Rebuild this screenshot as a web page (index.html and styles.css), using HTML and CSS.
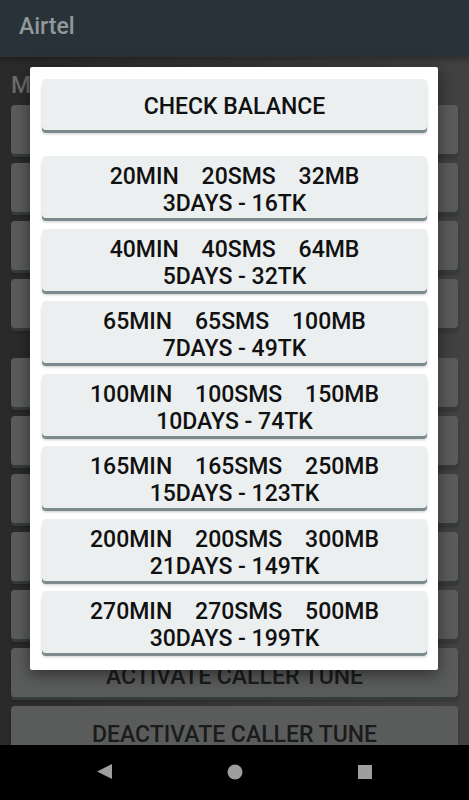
FILE: index.html
```html
<!DOCTYPE html>
<html lang="en">
<head>
  <meta charset="UTF-8" />
  <title>Airtel</title>
  <link rel="stylesheet" href="styles.css">
</head>
<body>
  <div class="appbar">Airtel</div>

  <div class="content">
    <div class="section-title">MY AIRTEL</div>
    <div class="group">
      <div class="btn">INTERNET PACKAGE</div>
      <div class="btn">MINUTE PACKAGE</div>
      <div class="btn">SMS PACKAGE</div>
      <div class="btn">BUNDLE PACKAGE</div>
    </div>
    <div class="group second">
      <div class="btn">CHECK BALANCE</div>
      <div class="btn">CHECK INTERNET</div>
      <div class="btn">CHECK MINUTE</div>
      <div class="btn">CHECK SMS</div>
      <div class="btn">EMERGENCY BALANCE</div>
      <div class="btn">ACTIVATE CALLER TUNE</div>
      <div class="btn">DEACTIVATE CALLER TUNE</div>
    </div>
  </div>

  <div class="navbar">
    <div class="nav-item">
      <svg width="16" height="16" viewBox="0 0 16 16"><polygon points="15,0 15,15 0,7.5" fill="#9e9e9e"/></svg>
    </div>
    <div class="nav-item">
      <svg width="16" height="16" viewBox="0 0 16 16"><circle cx="8" cy="8" r="7.5" fill="#9e9e9e"/></svg>
    </div>
    <div class="nav-item">
      <svg width="16" height="16" viewBox="0 0 16 16"><rect x="1" y="1" width="14" height="14" fill="#9e9e9e"/></svg>
    </div>
  </div>

  <!-- bundle dialog -->
  <div class="dialog">
    <div class="dbtn check">CHECK BALANCE</div>
    <div class="packs">
      <div class="dbtn pack">20MIN    20SMS    32MB
3DAYS - 16TK</div>
      <div class="dbtn pack">40MIN    40SMS    64MB
5DAYS - 32TK</div>
      <div class="dbtn pack">65MIN    65SMS    100MB
7DAYS - 49TK</div>
      <div class="dbtn pack">100MIN    100SMS    150MB
10DAYS - 74TK</div>
      <div class="dbtn pack">165MIN    165SMS    250MB
15DAYS - 123TK</div>
      <div class="dbtn pack">200MIN    200SMS    300MB
21DAYS - 149TK</div>
      <div class="dbtn pack">270MIN    270SMS    500MB
30DAYS - 199TK</div>
    </div>
  </div>
</body>
</html>
```

FILE: styles.css
```css
body {
  margin: 0;
  width: 469px;
  height: 800px;
  overflow: hidden;
  display: flex;
  flex-direction: column;
  font-family: Roboto, 'Noto Sans', sans-serif;
  font-size: 23px;
  background: linear-gradient(to right, #2a2a2a, #424242);
}
.appbar {
  height: 44px;
  padding: 13px 0 0 19px;
  background: #283238;
  color: #93989b;
  font-weight: 500;
  box-shadow: 0 2px 6px rgba(0,0,0,0.35);
  position: relative;
  z-index: 1;
}
.content {
  flex: 1;
  overflow: hidden;
  padding: 15px 11px 0;
}
.section-title {
  color: #6b6b6b;
  font-weight: 500;
  margin-bottom: 6px;
}
.group {
  display: flex;
  flex-direction: column;
  gap: 9px;
}
.group.second {
  margin-top: 30px;
}
.btn {
  height: 27px;
  padding: 15px 0 7px;
  background: #5a5c5b;
  border-radius: 4px;
  box-shadow: 0 3px 0 #363b3b, 0 4px 3px rgba(0,0,0,0.25);
  color: #1b1b1b;
  font-weight: 500;
  text-align: center;
}
.navbar {
  height: 55px;
  background: #000;
  display: grid;
  grid-template-columns: repeat(3, 130px);
  justify-content: center;
  align-items: center;
}
.nav-item {
  display: flex;
  justify-content: center;
  padding-bottom: 2px;
}
.dialog {
  position: absolute;
  left: 30px;
  top: 67px;
  width: 385px;
  padding: 12px 11px 17px 12px;
  background: #fff;
  border-radius: 2px;
  box-shadow: 0 4px 16px rgba(0,0,0,0.5);
  z-index: 2;
}
.dbtn {
  background: #eceff0;
  border-radius: 4px;
  box-shadow: 0 3px 0 #7b8a8c, 0 4px 3px rgba(0,0,0,0.2);
  color: #111;
  font-weight: 500;
  text-align: center;
}
.check {
  padding: 14px 0 10px;
}
.packs {
  margin-top: 26px;
  display: flex;
  flex-direction: column;
  gap: 10.5px;
}
.pack {
  padding: 7px 0 1px;
  white-space: pre;
}
```
